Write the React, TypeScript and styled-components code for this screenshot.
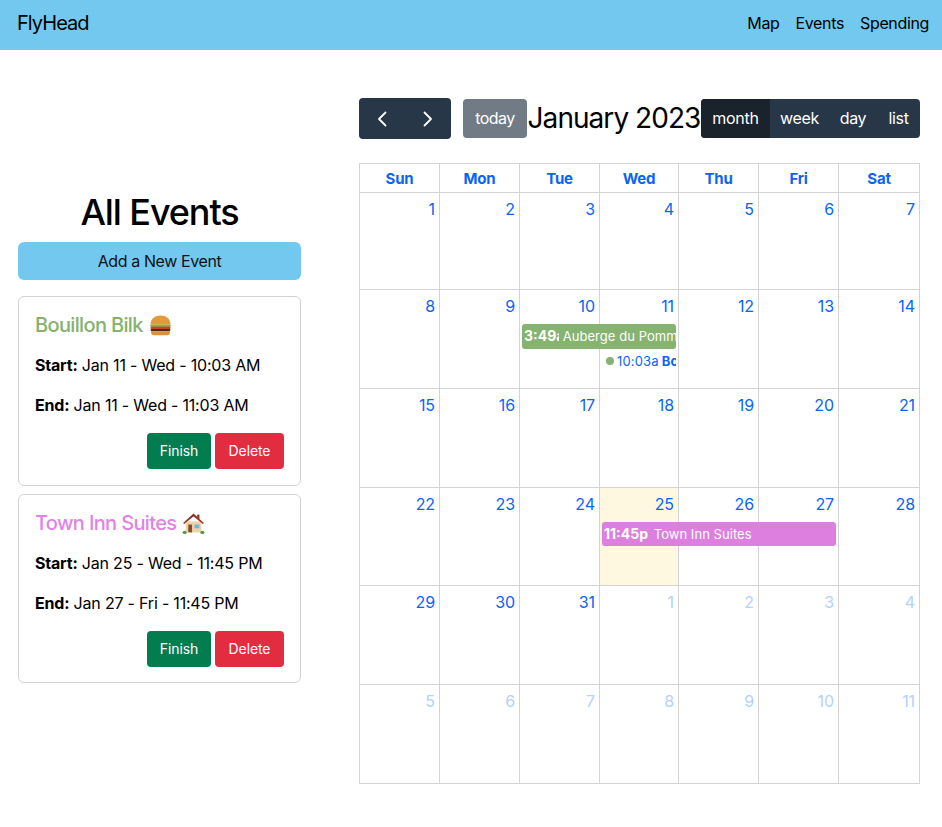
import React from 'react';
import styled, { createGlobalStyle } from 'styled-components';

const Global = createGlobalStyle`
  html, body { margin: 0; padding: 0; background: #fff; }
  body { font-family: Inter, "Liberation Sans", sans-serif; color: #000; font-size: 16px; }
  * { box-sizing: border-box; }
`;
const Nav = styled.nav`
  height: 50px; background: #72c8ee; display: flex; align-items: center;
  justify-content: space-between; padding: 0 13px 5px 17px;
`;
const Brand = styled.div`font-size: 20px; line-height: 1; letter-spacing: -0.95px;`;
const NavLinks = styled.div`display: flex; gap: 16px; font-size: 16px; letter-spacing: -0.35px;`;
const Page = styled.div`display: flex; align-items: flex-start; padding: 48px 22px 0 18px;`;
const Side = styled.aside`width: 283px; margin-right: 58px; padding-top: 93px; flex: none;`;
const Heading = styled.h1`
  margin: 0 0 8px; font-size: 36px; line-height: 43px; font-weight: 500; text-align: center; letter-spacing: -1.1px;
`;
const AddButton = styled.button`
  display: block; width: 100%; height: 38px; border: 0; border-radius: 6px; background: #72c8ee;
  color: #111; font: 400 16px Inter, sans-serif; letter-spacing: -0.4px; margin-bottom: 16px;
`;
const Card = styled.article<{ $h: number }>`
  height: ${p => p.$h}px; border: 1px solid #d2d2d2; border-radius: 6px; padding: 16px; margin-bottom: 8px;
`;
const CardTitle = styled.h2<{ $c: string }>`
  margin: 0 0 16px; font-size: 20px; line-height: 24px; font-weight: 500; color: ${p => p.$c};
  letter-spacing: -0.65px; display: flex; align-items: center; gap: 6px;
`;
const Line = styled.p`
  margin: 0 0 16px; line-height: 24px; font-size: 16px; letter-spacing: -0.2px;
  b { font-weight: 700; }
`;
const Actions = styled.div`display: flex; justify-content: flex-end; gap: 4px;`;
const ActionButton = styled.button<{ $bg: string; $w: number }>`
  width: ${p => p.$w}px; height: 36px; border: 0; border-radius: 4px; background: ${p => p.$bg}; color: #fff;
  font: 400 14px Inter, sans-serif; letter-spacing: -0.1px; padding: 0 0 2px;
`;
const Main = styled.main`width: 561px; flex: none;`;
const Toolbar = styled.div`display: flex; align-items: center; height: 41px; margin-bottom: 24px;`;
const NavGroup = styled.div`
  width: 92px; height: 41px; background: #273747; border-radius: 4px; display: flex; color: #fff; margin-right: 12px;
`;
const NavArrow = styled.div`flex: 1; display: flex; align-items: center; justify-content: center;`;
const Today = styled.div`
  width: 64px; height: 39px; background: #707b85; color: #fff; border-radius: 4px;
  display: flex; align-items: center; justify-content: center; font-size: 16px; letter-spacing: -0.5px; padding-bottom: 2px;
`;
const Title = styled.h2`
  margin: 0; width: 174px; text-align: center; font-size: 28px; font-weight: 400; line-height: 39px;
  white-space: nowrap; letter-spacing: -0.95px;
`;
const Views = styled.div`
  display: flex; width: 219px; height: 39px; background: #273747; border-radius: 4px; overflow: hidden; color: #fff;
`;
const ViewTab = styled.div<{ $w: number; $on?: boolean }>`
  width: ${p => p.$w}px; display: flex; align-items: center; justify-content: center; font-size: 16px;
  letter-spacing: -0.3px; padding-bottom: 2px; background: ${p => (p.$on ? '#1a232c' : 'transparent')};
`;
const Cal = styled.div`border-top: 1px solid #d3d3d3; border-left: 1px solid #d3d3d3; width: 561px;`;
const COLS = '80px 80px 80px 79px 80px 80px 81px';
const HeadRow = styled.div`display: grid; grid-template-columns: ${COLS}; height: 29px;`;
const HeadCell = styled.div`
  border-right: 1px solid #d3d3d3; border-bottom: 1px solid #d3d3d3; color: #0a64f5; font-weight: 700; font-size: 15px;
  letter-spacing: -0.2px; display: flex; align-items: center; justify-content: center;
`;
const Week = styled.div<{ $h: number }>`
  display: grid; grid-template-columns: ${COLS}; grid-template-rows: 32px auto auto 1fr; height: ${p => p.$h}px;
`;
const Day = styled.div<{ $col: number; $today?: boolean; $muted?: boolean }>`
  grid-column: ${p => p.$col}; grid-row: 1 / -1; border-right: 1px solid #d3d3d3; border-bottom: 1px solid #d3d3d3;
  background: ${p => (p.$today ? '#fef8e1' : 'transparent')}; letter-spacing: -0.1px;
  color: ${p => (p.$muted ? '#b3d1fb' : '#0a64f5')}; text-align: right; padding: 7px 4px 0 0; font-size: 16px; line-height: 19px;
`;
const Bar = styled.div<{ $bg: string; $from: number; $to: number; $h: number }>`
  grid-column: ${p => p.$from} / ${p => p.$to}; grid-row: 2; height: ${p => p.$h}px; z-index: 1; background: ${p => p.$bg};
  border-radius: 3px; margin: 2px 3px 0 2px; color: #fff; font-size: 13px; line-height: 24px;
  white-space: nowrap; overflow: hidden; display: flex; padding-left: 2px;
`;
const BarTime = styled.b<{ $w: number }>`font-weight: 700; width: ${p => p.$w}px; overflow: hidden; flex: none; font-size: 14px;`;
const BarTitle = styled.span`letter-spacing: 0.05px;`;
const DotEvent = styled.div`
  grid-column: 4; grid-row: 3; z-index: 1; display: flex; align-items: center; height: 20px; margin: 2px 3px 0 6px;
  color: #0a64f5; font-size: 13px; letter-spacing: 0.15px; white-space: nowrap; overflow: hidden;
  b { font-weight: 700; margin-left: 3px; }
`;
const Dot = styled.span`width: 8px; height: 8px; border-radius: 50%; background: #86b36f; margin-right: 3px; flex: none;`;

const Chevron = ({ left }: { left?: boolean }) => (
  <svg width="16" height="16" viewBox="0 0 16 16" fill="none" stroke="#fff" strokeWidth="1.8" strokeLinecap="round" strokeLinejoin="round">
    <path d={left ? 'M11.5 1.5 5 8l6.5 6.5' : 'M4.5 1.5 11 8l-6.5 6.5'} />
  </svg>
);
const Burger = () => (
  <svg width="23" height="23" viewBox="0 0 22 22" role="img" aria-label="hamburger">
    <path d="M1.5 10C1.5 4.5 6 1.5 11 1.5S20.5 4.5 20.5 10z" fill="#e39a3b" />
    <rect x="1.2" y="10" width="19.6" height="2.2" rx="1" fill="#7fb13c" />
    <rect x="1.5" y="12" width="19" height="2.6" rx="1" fill="#c9402f" />
    <rect x="1.5" y="14.4" width="19" height="2" rx="1" fill="#4a2a1a" />
    <path d="M2 16.4h18v1.6a2.6 2.6 0 0 1-2.6 2.4H4.6A2.6 2.6 0 0 1 2 18z" fill="#dc9038" />
  </svg>
);
const House = () => (
  <svg width="23" height="23" viewBox="0 0 22 22" role="img" aria-label="house">
    <rect x="3.5" y="9" width="15" height="10.5" fill="#ecd3a8" />
    <path d="M11 1.5 21 10.5l-1.2 1L11 4 2.2 11.5 1 10.5z" fill="#a5402f" />
    <path d="M11 2.5 19 9.5 11 4 3 9.5z" fill="#7d2d22" />
    <rect x="14.5" y="2.5" width="2.2" height="4" fill="#8b3a2c" />
    <rect x="6" y="12" width="3.6" height="7.5" fill="#8a4a2b" />
    <rect x="12" y="12" width="4.5" height="3.6" fill="#6fb4e6" />
    <ellipse cx="2.5" cy="19.5" rx="2" ry="1.6" fill="#5a9a3c" />
    <ellipse cx="19.5" cy="19.5" rx="2" ry="1.6" fill="#5a9a3c" />
  </svg>
);

const weeks: { h: number; days: [number, boolean][] }[] = [
  { h: 97, days: [1, 2, 3, 4, 5, 6, 7].map(n => [n, false]) },
  { h: 99, days: [8, 9, 10, 11, 12, 13, 14].map(n => [n, false]) },
  { h: 99, days: [15, 16, 17, 18, 19, 20, 21].map(n => [n, false]) },
  { h: 98, days: [22, 23, 24, 25, 26, 27, 28].map(n => [n, false]) },
  { h: 99, days: [[29, false], [30, false], [31, false], [1, true], [2, true], [3, true], [4, true]] },
  { h: 99, days: [5, 6, 7, 8, 9, 10, 11].map(n => [n, true]) },
];

export default function App() {
  return (
    <>
      <Global />
      <Nav>
        <Brand>FlyHead</Brand>
        <NavLinks><span>Map</span><span>Events</span><span>Spending</span></NavLinks>
      </Nav>
      <Page>
        <Side>
          <Heading>All Events</Heading>
          <AddButton>Add a New Event</AddButton>
          <Card $h={190}>
            <CardTitle $c="#83b26d">Bouillon Bilk <Burger /></CardTitle>
            <Line><b>Start:</b> Jan 11 - Wed - 10:03 AM</Line>
            <Line><b>End:</b> Jan 11 - Wed - 11:03 AM</Line>
            <Actions>
              <ActionButton $bg="#037d50" $w={64}>Finish</ActionButton>
              <ActionButton $bg="#e22d41" $w={69}>Delete</ActionButton>
            </Actions>
          </Card>
          <Card $h={189}>
            <CardTitle $c="#e183e3">Town Inn Suites <House /></CardTitle>
            <Line><b>Start:</b> Jan 25 - Wed - 11:45 PM</Line>
            <Line><b>End:</b> Jan 27 - Fri - 11:45 PM</Line>
            <Actions>
              <ActionButton $bg="#037d50" $w={64}>Finish</ActionButton>
              <ActionButton $bg="#e22d41" $w={69}>Delete</ActionButton>
            </Actions>
          </Card>
        </Side>
        <Main>
          <Toolbar>
            <NavGroup><NavArrow><Chevron left /></NavArrow><NavArrow><Chevron /></NavArrow></NavGroup>
            <Today>today</Today>
            <Title>January 2023</Title>
            <Views>
              <ViewTab $w={69} $on>month</ViewTab>
              <ViewTab $w={59}>week</ViewTab>
              <ViewTab $w={48}>day</ViewTab>
              <ViewTab $w={43}>list</ViewTab>
            </Views>
          </Toolbar>
          <Cal>
            <HeadRow>
              {['Sun', 'Mon', 'Tue', 'Wed', 'Thu', 'Fri', 'Sat'].map(d => <HeadCell key={d}>{d}</HeadCell>)}
            </HeadRow>
            {weeks.map((w, i) => (
              <Week key={i} $h={w.h}>
                {w.days.map(([n, muted], c) => (
                  <Day key={c} $col={c + 1} $muted={muted} $today={i === 3 && c === 3}>{n}</Day>
                ))}
                {i === 1 && (
                  <>
                    <Bar $bg="#86b36f" $from={3} $to={5} $h={25}>
                      <BarTime $w={35}>3:49a</BarTime><BarTitle>&nbsp;Auberge du Pommier</BarTitle>
                    </Bar>
                    <DotEvent><Dot />10:03a<b>Bouillon Bilk</b></DotEvent>
                  </>
                )}
                {i === 3 && (
                  <Bar $bg="#dd7fdf" $from={4} $to={7} $h={24}>
                    <BarTime $w={46}>11:45p</BarTime><BarTitle>&nbsp;Town Inn Suites</BarTitle>
                  </Bar>
                )}
              </Week>
            ))}
          </Cal>
        </Main>
      </Page>
    </>
  );
}
